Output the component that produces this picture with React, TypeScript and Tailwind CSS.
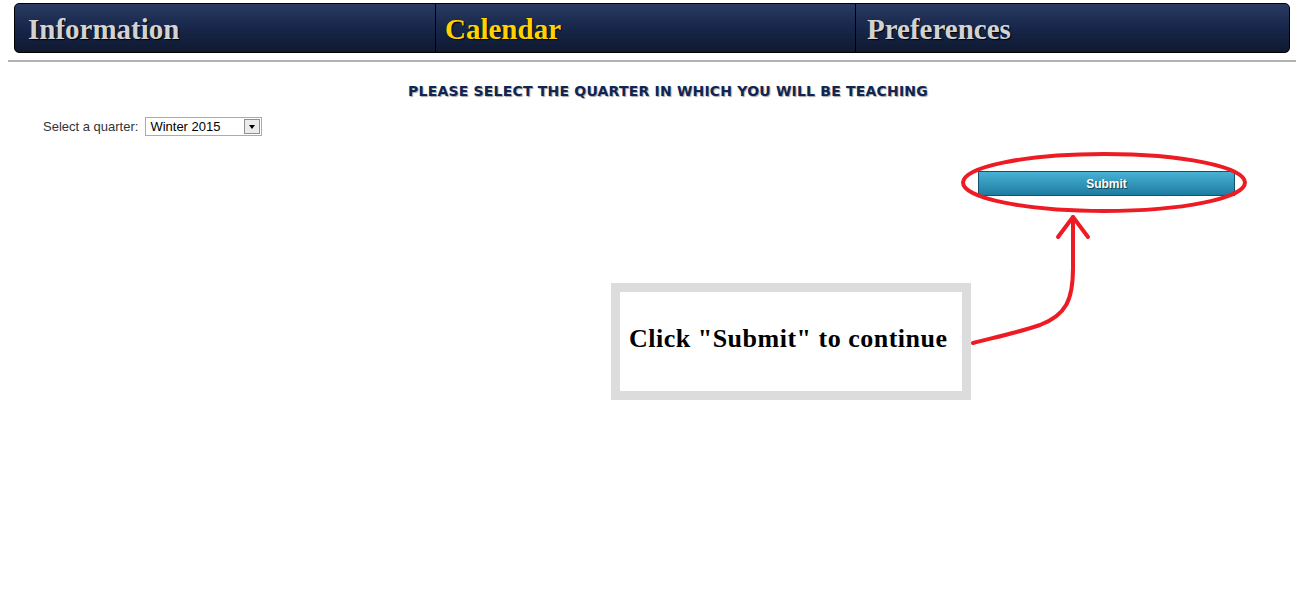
import React from "react";

const tabs = [
  { label: "Information", active: false, width: "w-[420px]", pad: "pl-[13px]" },
  { label: "Calendar", active: true, width: "w-[420px]", pad: "pl-[9px]" },
  { label: "Preferences", active: false, width: "flex-1", pad: "pl-[11px]" },
];

const Annotations: React.FC = () => (
  <svg
    className="pointer-events-none absolute left-0 top-0"
    width="1304"
    height="615"
    viewBox="0 0 1304 615"
  >
    <ellipse cx="1104" cy="182.5" rx="141" ry="28.5" fill="none" stroke="#ed1c24" strokeWidth="4" />
    <path
      d="M1073 217 L1073 268 C1073 300 1066 315 1040 325 C1020 332 992 338 973 343"
      fill="none"
      stroke="#ed1c24"
      strokeWidth="4"
      strokeLinecap="round"
    />
    <path
      d="M1058 237 L1073 217 L1088 237"
      fill="none"
      stroke="#ed1c24"
      strokeWidth="4"
      strokeLinecap="round"
      strokeLinejoin="round"
    />
  </svg>
);

const App: React.FC = () => {
  return (
    <div className="relative min-h-screen w-full bg-white">
      {/* top nav */}
      <div className="px-[14px] pt-[3px]">
        <nav className="flex h-[50px] overflow-hidden rounded-[5px] border border-black bg-linear-to-b from-[#2a3b62] via-[#17264a] to-[#0f1930]">
          {tabs.map((t, i) => (
            <div
              key={t.label}
              className={`${t.width} ${t.pad} flex items-center pt-[2px] ${i > 0 ? "border-l border-black" : ""}`}
            >
              <span
                className={`font-['Liberation_Serif',serif] text-[29px] font-bold leading-none [text-shadow:1px_1px_1px_#000] ${
                  t.active ? "text-[#ffd200]" : "text-[#d2d2d2]"
                }`}
              >
                {t.label}
              </span>
            </div>
          ))}
        </nav>
      </div>

      <div className="mx-[8px] mt-[7px] h-[2px] bg-[#b2b2b2]" />

      <main className="font-['Liberation_Sans',Arial,sans-serif]">
        <h2 className="mt-[20px] pl-[32px] text-center font-['DejaVu_Sans',sans-serif] text-[14px] font-bold leading-[18px] tracking-[0.2px] text-[#102552] [text-shadow:1px_1px_1px_#a8a8a8]">
          PLEASE SELECT THE QUARTER IN WHICH YOU WILL BE TEACHING
        </h2>

        <div className="mt-[17px] flex items-center pl-[43px] text-[13px] text-[#333]">
          <span>Select a quarter:</span>
          <div className="ml-[7px] flex h-[19px] w-[117px] items-center border border-[#a5acb2] bg-white">
            <span className="flex-1 pl-[4px] text-[13px] leading-none text-[#000]">Winter 2015</span>
            <span className="mr-px flex h-[15px] w-[16px] items-center justify-center border border-[#8e8f8f] bg-[#ececec]">
              <span className="h-0 w-0 border-x-[3.5px] border-t-[4px] border-x-transparent border-t-black" />
            </span>
          </div>
        </div>

        <div className="mt-[34px] flex justify-end pr-[69px]">
          <button className="h-[25px] w-[257px] border border-[#14536f] bg-linear-to-b from-[#48b1d4] to-[#1c7da1] pt-[1px] text-[12px] font-bold text-white [text-shadow:1px_1px_1px_#1a3a48]">
            Submit
          </button>
        </div>
      </main>

      {/* callout */}
      <div className="absolute left-[611px] top-[283px] flex h-[117px] w-[360px] items-center border-[9px] border-[#dcdcdc] bg-white pb-[6px] pl-[9px]">
        <span className="font-['Liberation_Serif',serif] text-[26px] font-bold tracking-[0.5px] text-black">
          Click "Submit" to continue
        </span>
      </div>

      <Annotations />
    </div>
  );
};

export default App;
